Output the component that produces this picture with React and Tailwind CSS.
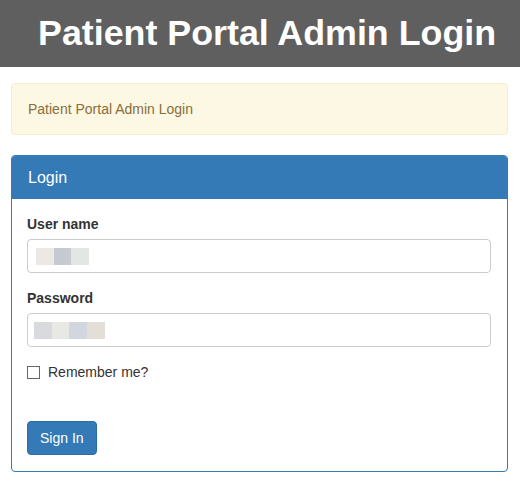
const App = () => {
  return (
    <div
      className="min-h-screen bg-white text-[#333] text-[14px] leading-[20px]"
      style={{ fontFamily: '"Liberation Sans", Arial, sans-serif' }}
    >
      <div className="h-[67px] bg-[#5f5f5f] flex items-center pl-[38px] pt-[1px]">
        <h1 className="text-[35.8px] font-bold text-white leading-none">
          Patient Portal Admin Login
        </h1>
      </div>

      <div className="pl-[11px] pr-[12px] pt-[16px]">
        <div className="rounded-[4px] border border-[#faebcc] bg-[#fcf8e3] text-[#8a6d3b] px-[16px] py-[15px] mb-[20px]">
          Patient Portal Admin Login
        </div>

        <div className="rounded-[4px] border border-[#337ab7] overflow-hidden">
          <div className="h-[43px] bg-[#337ab7] text-white text-[16px] flex items-center px-[16px]">
            Login
          </div>
          <div className="pl-[15px] pr-[16px] pt-[15px] pb-[16px]">
            <div className="mb-[15px]">
              <label className="block font-bold mb-[5px]">User name</label>
              <div className="h-[34px] rounded-[4px] border border-[#ccc] flex items-center px-[8px]">
                <span className="w-[18px] h-[17px] bg-[#ece8e5]" />
                <span className="w-[17px] h-[17px] bg-[#c6c9d1]" />
                <span className="w-[18px] h-[17px] bg-[#e3e7e3]" />
              </div>
            </div>
            <div className="mb-[15px]">
              <label className="block font-bold mb-[5px]">Password</label>
              <div className="h-[34px] rounded-[4px] border border-[#ccc] flex items-center px-[6px]">
                <span className="w-[18px] h-[17px] bg-[#d9dade]" />
                <span className="w-[17px] h-[17px] bg-[#e8e8e5]" />
                <span className="w-[18px] h-[17px] bg-[#d1d6df]" />
                <span className="w-[18px] h-[17px] bg-[#e3ded8]" />
              </div>
            </div>
            <label className="flex items-center gap-[8px] h-[20px]">
              <span className="w-[13px] h-[13px] border border-[#666] bg-white" />
              <span>Remember me?</span>
            </label>
            <button className="mt-[39px] h-[34px] px-[12px] rounded-[4px] bg-[#337ab7] border border-[#2e6da4] text-white">
              Sign In
            </button>
          </div>
        </div>
      </div>
    </div>
  );
};

export default App;
